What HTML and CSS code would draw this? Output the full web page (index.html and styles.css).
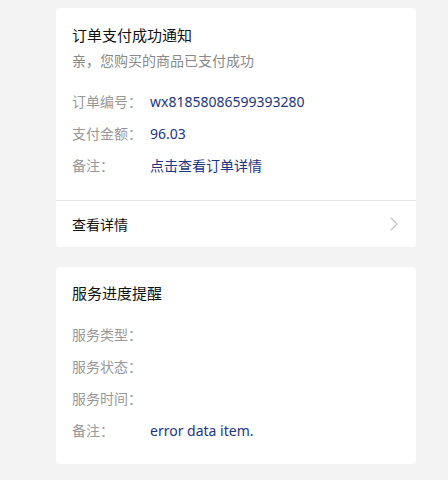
FILE: index.html
```html
<!DOCTYPE html>
<html lang="zh-CN">

<head>
    <meta charset="UTF-8">
    <meta name="viewport" content="width=device-width, initial-scale=1.0">
    <title>消息通知</title>
    <link rel="stylesheet" href="styles.css">
</head>

<body>
    <div class="container">

        <div class="card">
            <div class="card-body">
                <div class="card-title">订单支付成功通知</div>
                <div class="card-sub">亲，您购买的商品已支付成功</div>
                <div class="rows">
                    <div class="row">
                        <span class="label">订单编号：</span>
                        <span class="value">wx81858086599393280</span>
                    </div>
                    <div class="row">
                        <span class="label">支付金额：</span>
                        <span class="value">96.03</span>
                    </div>
                    <div class="row">
                        <span class="label">备注：</span>
                        <span class="value">点击查看订单详情</span>
                    </div>
                </div>
            </div>
            <div class="card-footer">
                <span>查看详情</span>
                <svg class="arrow" width="8" height="14" viewBox="0 0 8 14">
                    <polyline points="1,1 7,7 1,13" fill="none" stroke="#c2c2c2" stroke-width="1.3" />
                </svg>
            </div>
        </div>

        <div class="card">
            <div class="card-body card-body-2">
                <div class="card-title">服务进度提醒</div>
                <div class="rows">
                    <div class="row">
                        <span class="label">服务类型：</span>
                        <span class="value"></span>
                    </div>
                    <div class="row">
                        <span class="label">服务状态：</span>
                        <span class="value"></span>
                    </div>
                    <div class="row">
                        <span class="label">服务时间：</span>
                        <span class="value"></span>
                    </div>
                    <div class="row">
                        <span class="label">备注：</span>
                        <span class="value">error data item.</span>
                    </div>
                </div>
            </div>
        </div>

    </div>
</body>

</html>
```

FILE: styles.css
```css
body{
    margin: 0;
    background-color: #f3f3f3;
    font-family: "Noto Sans", "Noto Sans CJK SC", sans-serif;
}

.container{
    width: 360px;
    margin-left: 56px;
    padding-top: 8px;
}

.card{
    background-color: #fff;
    border-radius: 3px;
    margin-bottom: 20px;
}

.card-body{
    padding: 16px 16px 18px;
}

.card-body-2{
    padding: 15px 16px 17px;
}

.card-title{
    font-size: 15px;
    line-height: 22px;
    color: #111;
}

.card-sub{
    margin-top: 5px;
    font-size: 14px;
    line-height: 20px;
    color: #8a8a8a;
}

.rows{
    margin-top: 15px;
}

.row{
    display: flex;
    font-size: 14px;
    line-height: 32px;
    height: 32px;
}

.label{
    width: 78px;
    flex-shrink: 0;
    color: #999;
}

.value{
    color: #1d3585;
}

.card-footer{
    border-top: 1px solid #e6e6e6;
    height: 46px;
    padding: 0 18px 0 16px;
    display: flex;
    justify-content: space-between;
    align-items: center;
    font-size: 14px;
    color: #111;
}

.arrow{
    display: block;
}
```
